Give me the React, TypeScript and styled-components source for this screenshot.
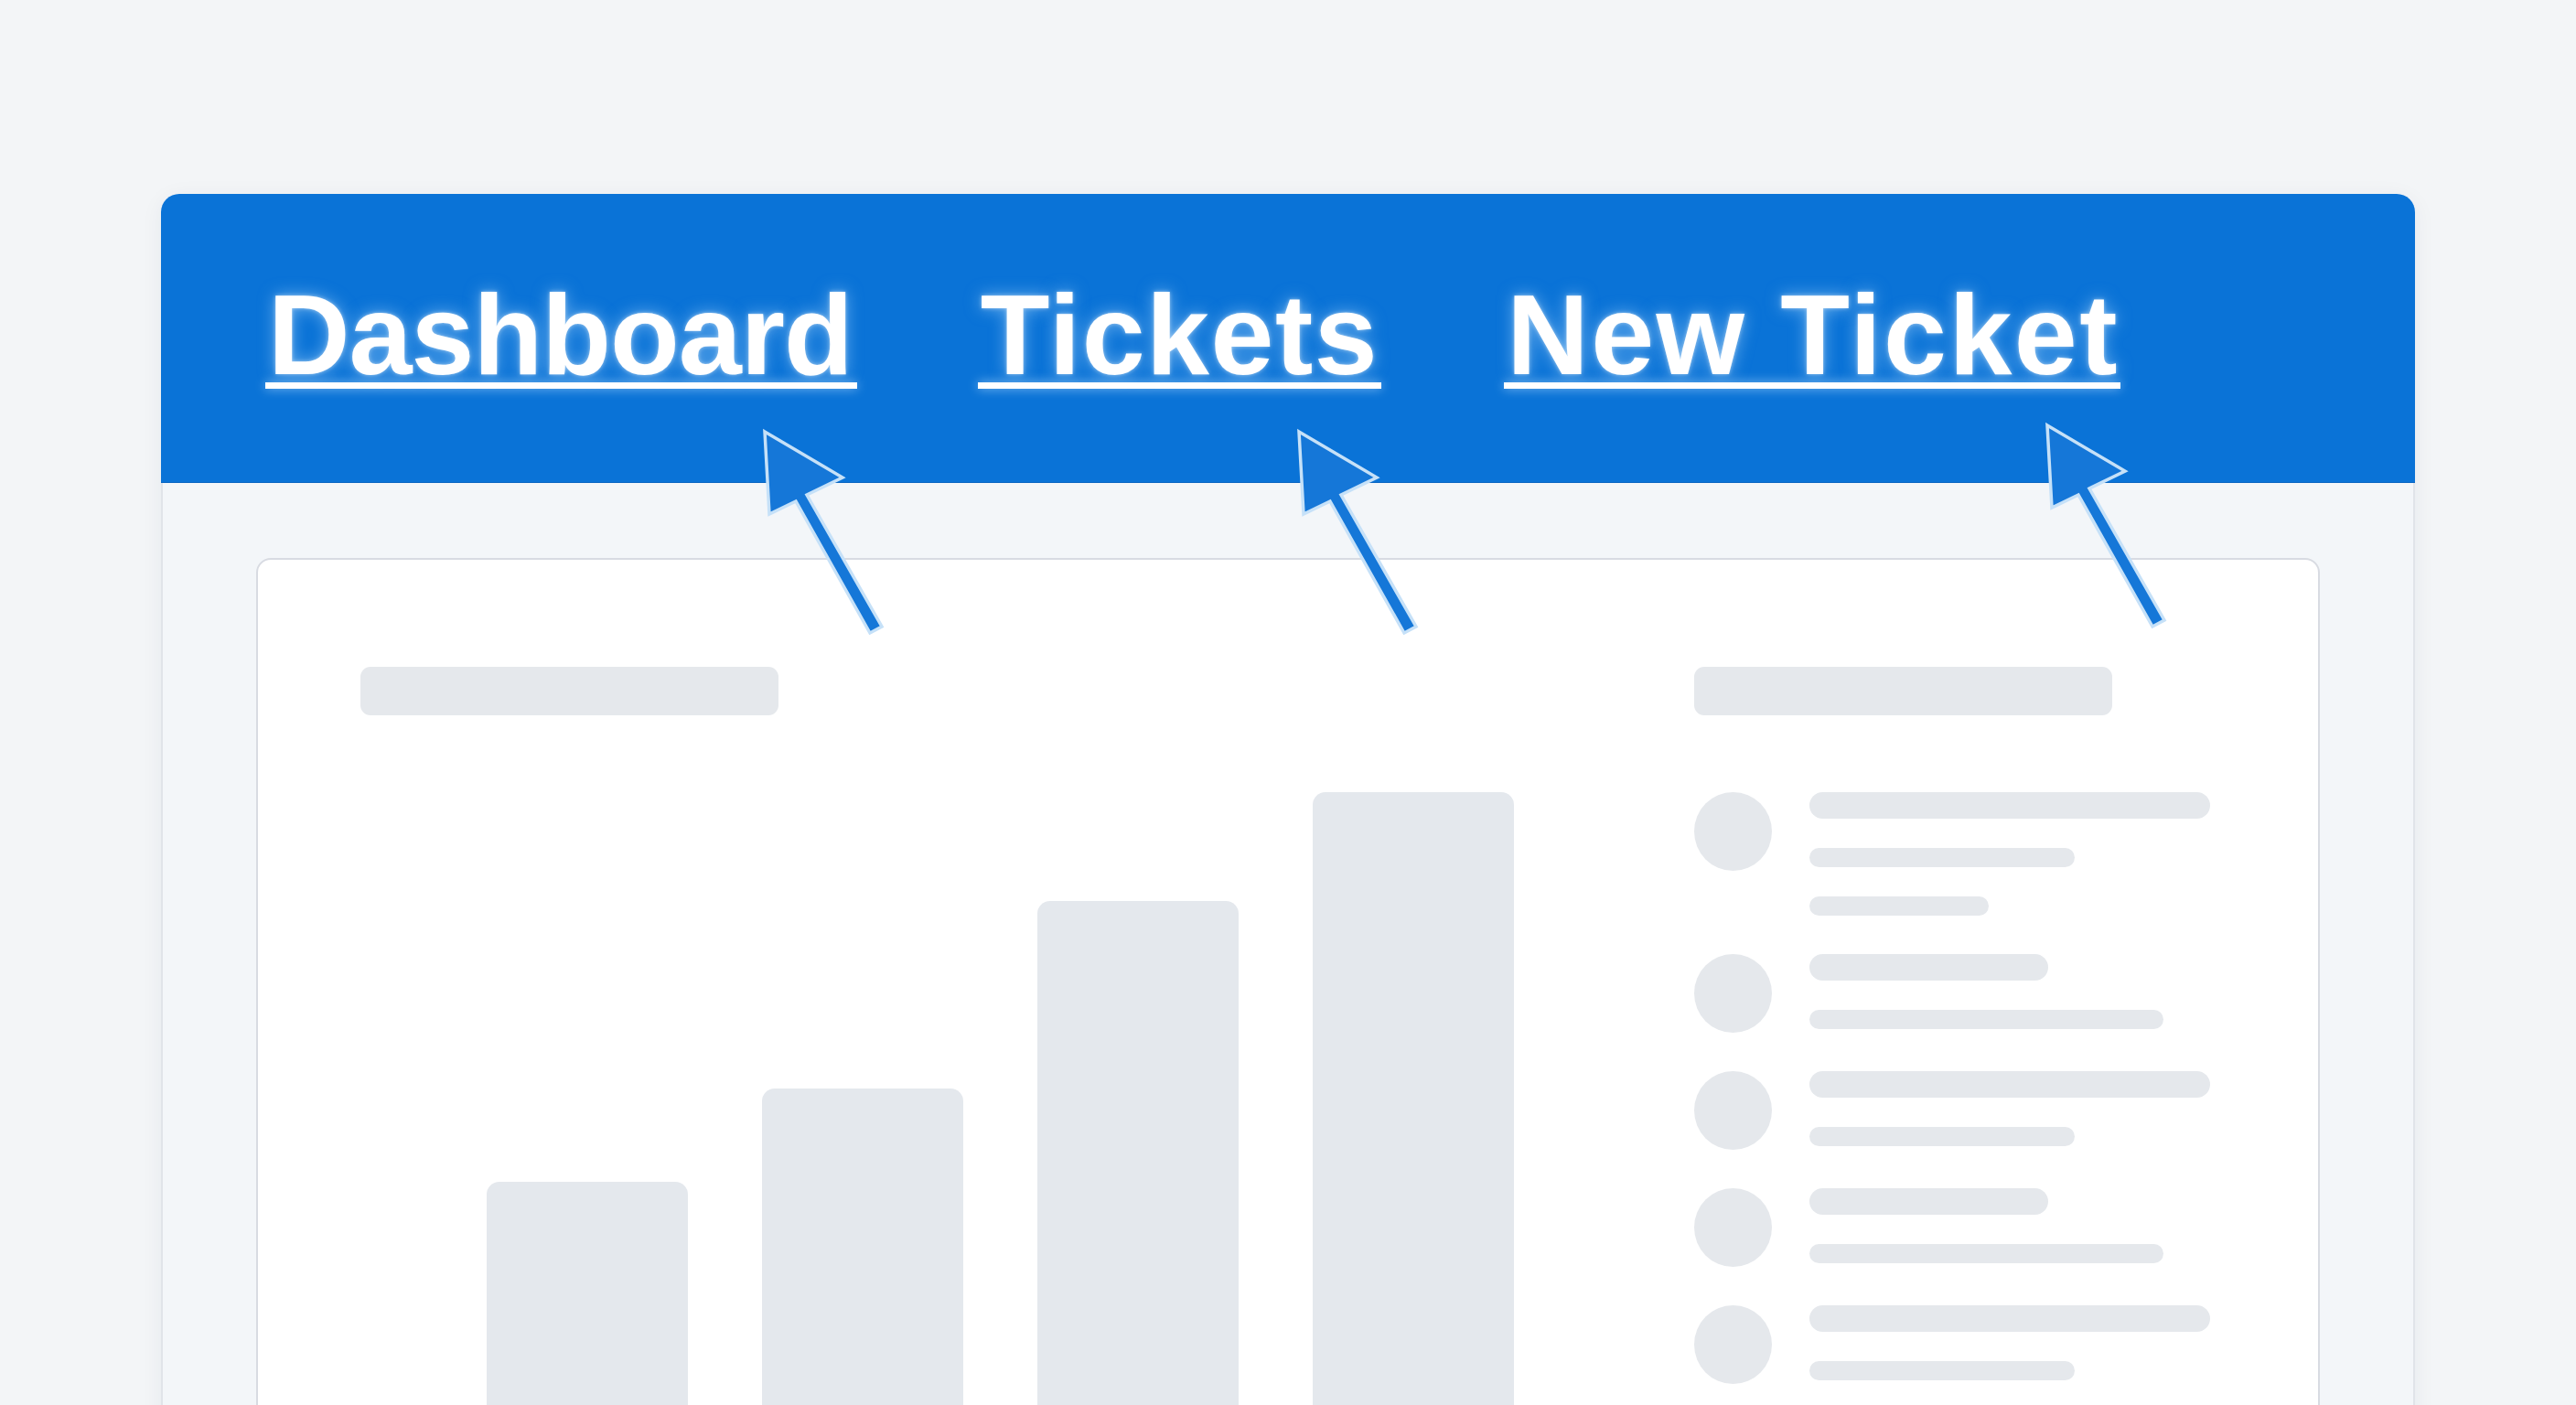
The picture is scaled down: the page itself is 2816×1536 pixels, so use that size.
import React from "react";
import styled, { createGlobalStyle } from "styled-components";

const GlobalStyle = createGlobalStyle`
  html, body {
    margin: 0;
    padding: 0;
    background: #f3f5f7;
    overflow: hidden;
    font-family: "Liberation Sans", Arial, sans-serif;
  }
  #root { height: 100vh; }
`;

const Page = styled.div`
  padding: 212px 0 0 176px;
  height: 100vh;
  box-sizing: border-box;
`;

const Window = styled.div`
  width: 2464px;
  border-radius: 20px 20px 0 0;
  box-shadow: 0 4px 24px rgba(30, 50, 80, 0.06);
`;

const Header = styled.header`
  height: 316px;
  box-sizing: border-box;
  background: #0a73d7;
  border-radius: 20px 20px 0 0;
  padding: 92px 0 0 117px;
  display: flex;
  align-items: flex-start;
  gap: 140px;
  border-bottom: 1px solid #0a66c2;
`;

const NavLink = styled.a<{ $tracking: number }>`
  position: relative;
  display: inline-block;
  color: #ffffff;
  font-family: "Liberation Sans", Arial, sans-serif;
  font-weight: 700;
  font-size: 124px;
  line-height: 124px;
  letter-spacing: ${(p) => p.$tracking}px;
  text-decoration: none;
  white-space: nowrap;
  text-shadow: 0 0 4px rgba(255, 255, 255, 0.5), 0 0 18px rgba(190, 225, 255, 0.55);
  &::after {
    content: "";
    position: absolute;
    left: -3px;
    right: ${(p) => p.$tracking - 4}px;
    top: 114px;
    height: 7px;
    background: #ffffff;
    box-shadow: 0 0 12px rgba(190, 225, 255, 0.7);
  }
`;

const CursorSvg = styled.svg<{ $left: number; $top: number }>`
  position: absolute;
  left: ${(p) => p.$left}px;
  top: ${(p) => p.$top}px;
  width: 140px;
  height: 232px;
  overflow: visible;
  pointer-events: none;
`;

const Body = styled.div`
  background: #f3f6f9;
  border-left: 2px solid #e0e4e9;
  border-right: 2px solid #e0e4e9;
  padding: 82px 102px 0;
`;

const Card = styled.section`
  background: #ffffff;
  border: 2px solid #d8dbe2;
  border-radius: 16px;
  padding: 117px 0 0 112px;
  height: 1200px;
  box-sizing: border-box;
  display: flex;
`;

const LeftColumn = styled.div`
  width: 1458px;
  flex: none;
  display: flex;
  flex-direction: column;
`;

const RightColumn = styled.div`
  flex: 1;
  display: flex;
  flex-direction: column;
`;

const TitleBar = styled.div`
  width: 457px;
  height: 53px;
  border-radius: 11px;
  background: #e5e8ec;
  margin-bottom: 84px;
`;

const Chart = styled.div`
  display: flex;
  align-items: flex-end;
  gap: 81px;
  padding-left: 138px;
  height: 800px;
`;

const Bar = styled.div<{ $h: number }>`
  width: 220px;
  height: ${(p) => p.$h}px;
  background: #e4e8ed;
  border-radius: 14px 14px 0 0;
`;

const List = styled.div`
  display: flex;
  flex-direction: column;
  gap: 42px;
`;

const Item = styled.div`
  display: flex;
  align-items: flex-start;
  gap: 41px;
`;

const Avatar = styled.div`
  width: 85px;
  height: 86px;
  border-radius: 50%;
  background: #e5e8ec;
  flex: none;
`;

const Lines = styled.div`
  display: flex;
  flex-direction: column;
  gap: 32px;
`;

const Line = styled.div<{ $w: number; $h: number }>`
  width: ${(p) => p.$w}px;
  height: ${(p) => p.$h}px;
  border-radius: 999px;
  background: #e5e8ec;
`;

const Cursor = ({ left, top }: { left: number; top: number }) => (
  <CursorSvg $left={left} $top={top} viewBox="0 0 140 232">
    <polygon
      points="0,0 85,50 46,69 128,213 115,220 34,76 5,90"
      fill="#1577d8"
      stroke="#c6e1f8"
      strokeWidth="3.5"
      strokeLinejoin="miter"
    />
  </CursorSvg>
);

const navItems = [
  { label: "Dashboard", left: 543, top: 168, tracking: -1 },
  { label: "Tickets", left: 348, top: 168, tracking: 1.5 },
  { label: "New Ticket", left: 591, top: 161, tracking: 2.4 },
];

const bars = [374, 476, 681, 800];

const items: { lines: number[] }[] = [
  { lines: [438, 290, 196] },
  { lines: [261, 387] },
  { lines: [438, 290] },
  { lines: [261, 387] },
  { lines: [438, 290] },
];

export default function App() {
  return (
    <>
      <GlobalStyle />
      <Page>
        <Window>
          <Header>
            {navItems.map((n) => (
              <NavLink key={n.label} href="#" $tracking={n.tracking}>
                {n.label}
                <Cursor left={n.left} top={n.top} />
              </NavLink>
            ))}
          </Header>
          <Body>
            <Card>
              <LeftColumn>
                <TitleBar />
                <Chart>
                  {bars.map((h, i) => (
                    <Bar key={i} $h={h} />
                  ))}
                </Chart>
              </LeftColumn>
              <RightColumn>
                <TitleBar />
                <List>
                  {items.map((it, i) => (
                    <Item key={i}>
                      <Avatar />
                      <Lines>
                        {it.lines.map((w, j) => (
                          <Line key={j} $w={w} $h={j === 0 ? 29 : 21} />
                        ))}
                      </Lines>
                    </Item>
                  ))}
                </List>
              </RightColumn>
            </Card>
          </Body>
        </Window>
      </Page>
    </>
  );
}
